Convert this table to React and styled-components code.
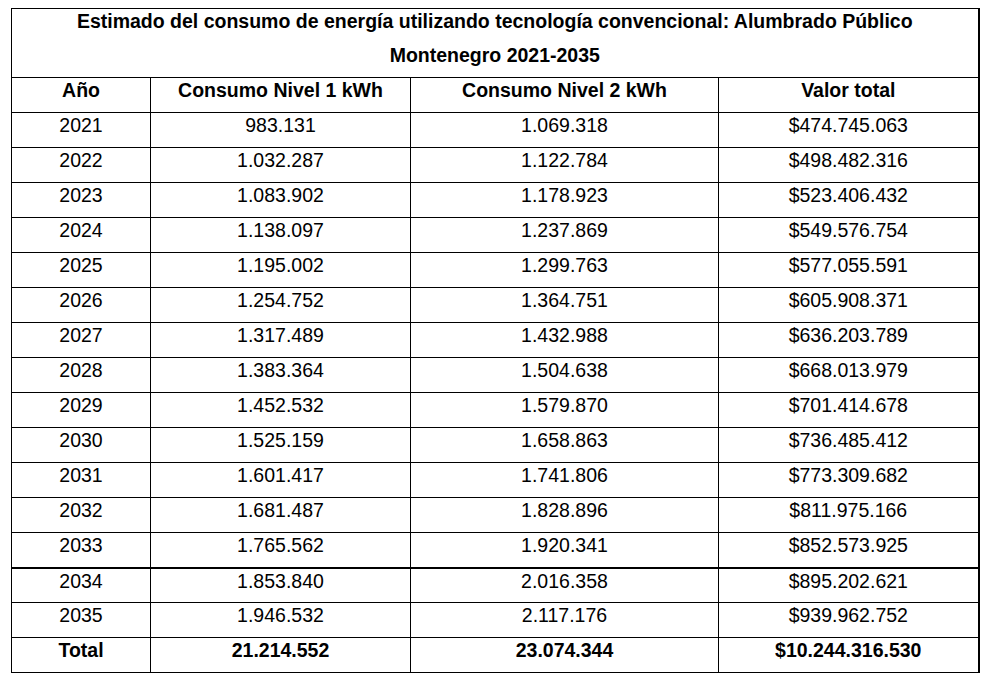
import React from 'react';
import styled, { createGlobalStyle } from 'styled-components';

const GlobalStyle = createGlobalStyle`
  body {
    margin: 0;
    background: #ffffff;
    font-family: 'Liberation Sans', Arial, sans-serif;
    color: #000000;
  }
`

const Page = styled.div`
  padding: 8px 0 0 11px;
`

const Table = styled.table`
  border-collapse: collapse;
  table-layout: fixed;
  width: 967px;
  border: 1px solid #000;
  border-right: 2px solid #000;
  font-size: 19.5px;
`

const Cell = styled.td`
  border: 1px solid #000;
  border-top: ${props => props.$thickTop ? '2px' : '1px'} solid #000;
  height: 35px;
  padding: 1px 0 0;
  box-sizing: border-box;
  vertical-align: top;
  text-align: center;
  line-height: 22px;
  font-weight: ${props => props.$bold ? 700 : 400};
  white-space: nowrap;
`

const TitleCell = styled.td`
  border: 1px solid #000;
  height: 67px;
  padding: 1px 0 0;
  vertical-align: top;
  text-align: center;
  font-weight: 700;
  line-height: 22px;
`

const TitleLine = styled.div`
  & + & {
    margin-top: 12px;
  }
`

const rows = [
  ['2021', '983.131', '1.069.318', '$474.745.063'],
  ['2022', '1.032.287', '1.122.784', '$498.482.316'],
  ['2023', '1.083.902', '1.178.923', '$523.406.432'],
  ['2024', '1.138.097', '1.237.869', '$549.576.754'],
  ['2025', '1.195.002', '1.299.763', '$577.055.591'],
  ['2026', '1.254.752', '1.364.751', '$605.908.371'],
  ['2027', '1.317.489', '1.432.988', '$636.203.789'],
  ['2028', '1.383.364', '1.504.638', '$668.013.979'],
  ['2029', '1.452.532', '1.579.870', '$701.414.678'],
  ['2030', '1.525.159', '1.658.863', '$736.485.412'],
  ['2031', '1.601.417', '1.741.806', '$773.309.682'],
  ['2032', '1.681.487', '1.828.896', '$811.975.166'],
  ['2033', '1.765.562', '1.920.341', '$852.573.925'],
  ['2034', '1.853.840', '2.016.358', '$895.202.621'],
  ['2035', '1.946.532', '2.117.176', '$939.962.752'],
]

const headers = ['Año', 'Consumo Nivel 1 kWh', 'Consumo Nivel 2 kWh', 'Valor total']
const totals = ['Total', '21.214.552', '23.074.344', '$10.244.316.530']

export default function App() {
  return (
    <Page>
      <GlobalStyle />
      <Table>
        <colgroup>
          <col style={{ width: 139 }} />
          <col style={{ width: 260 }} />
          <col style={{ width: 308 }} />
          <col style={{ width: 260 }} />
        </colgroup>
        <tbody>
          <tr>
            <TitleCell colSpan={4}>
              <TitleLine>Estimado del consumo de energía utilizando tecnología convencional: Alumbrado Público</TitleLine>
              <TitleLine>Montenegro 2021-2035</TitleLine>
            </TitleCell>
          </tr>
          <tr>
            {headers.map(h => <Cell key={h} $bold>{h}</Cell>)}
          </tr>
          {rows.map(row => (
            <tr key={row[0]}>
              {row.map((value, i) => (
                <Cell key={i} $thickTop={row[0] === '2034'}>{value}</Cell>
              ))}
            </tr>
          ))}
          <tr>
            {totals.map(t => <Cell key={t} $bold>{t}</Cell>)}
          </tr>
        </tbody>
      </Table>
    </Page>
  )
}
